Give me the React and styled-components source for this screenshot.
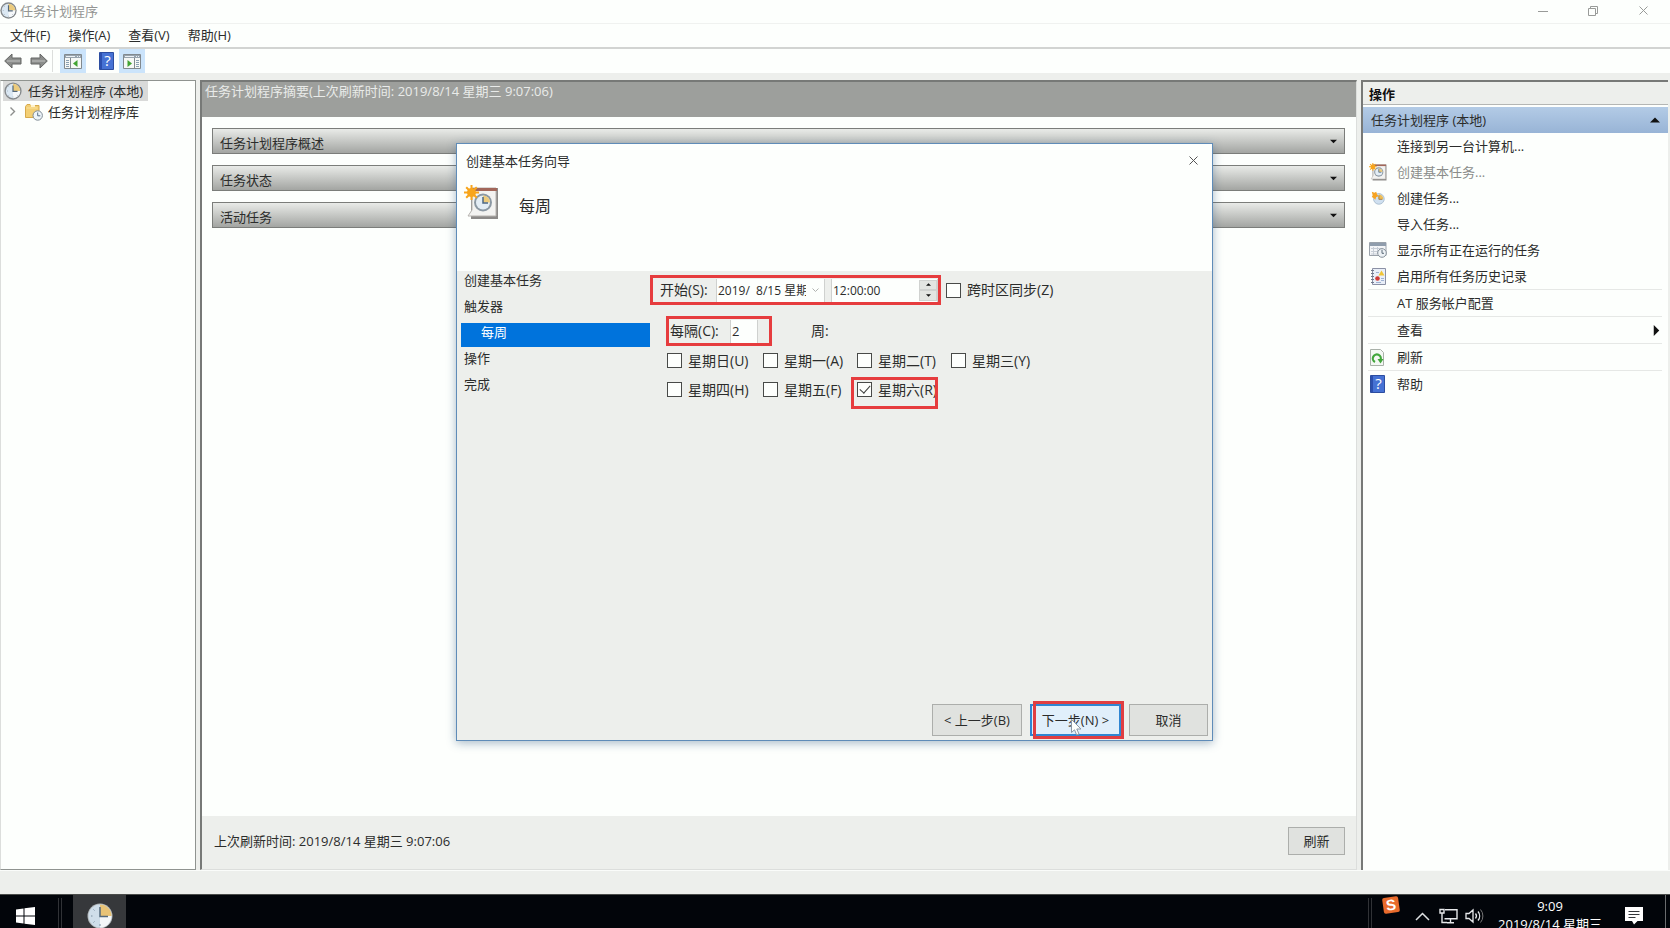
import { useState } from "react";
import styled, { createGlobalStyle, css } from "styled-components";

const GlobalStyle = createGlobalStyle`
  * {
    box-sizing: border-box;
  }
  body {
    margin: 0;
    overflow: hidden;
  }
  body, button, input {
    font-family: "Open Sans", "Noto Sans CJK SC", sans-serif;
    font-size: 13px;
    line-height: 18px;
    color: #2b2c2b;
  }
  button {
    padding: 0;
    border: 0;
    background: none;
  }
  svg {
    display: block;
    flex: none;
  }
`;

const Desktop = styled.div`
  position: relative;
  display: flex;
  flex-direction: column;
  height: 100vh;
  background: #edefec;
`;

const TitleBar = styled.header`
  display: flex;
  align-items: center;
  height: 23px;
  padding: 0 2px 2px 0;
  background: #fdfffd;
  color: #939593;
`;

const WindowTitle = styled.h1`
  flex: 1;
  margin: 0 0 0 3px;
  font-size: 13px;
  font-weight: 400;
`;

const WindowButton = styled.button`
  display: flex;
  justify-content: center;
  width: 50px;
`;

const MenuBar = styled.nav`
  display: flex;
  align-items: center;
  gap: 18px;
  height: 26px;
  padding: 0 0 2px 10px;
  background: #fdfffd;
  border-top: 1px solid #f0f2f0;
  border-bottom: 2px solid #d2d4d2;
`;

const ToolBar = styled.div`
  display: flex;
  align-items: center;
  height: 24px;
  background: #fdfffd;
`;

const ToolButton = styled.button`
  display: flex;
  align-items: center;
  justify-content: center;
  width: 26px;
  height: 24px;
  margin-left: ${(props) => props.$before || "0"};
  background: ${(props) => (props.$on ? "#cbe4fb" : "transparent")};
`;

const ToolDivider = styled.span`
  width: 1px;
  height: 22px;
  background: #dcdedc;
`;

const Workspace = styled.div`
  display: flex;
  flex: 1;
  gap: 4px;
  min-height: 0;
  padding: 7px 2px 0 0;
`;

const TreePane = styled.aside`
  flex: none;
  width: 196px;
  background: #fdfffd;
  border: 1px solid #8f9390;
  border-left-color: #dcdedc;
`;

const TreeRoot = styled.button`
  display: flex;
  align-items: center;
  gap: 6px;
  height: 20px;
  margin-left: 2px;
  padding: 0 5px 0 1px;
  background: #d9dad9;
`;

const TreeChild = styled.button`
  display: flex;
  align-items: center;
  gap: 5px;
  height: 21px;
  padding-left: 9px;

  svg:first-child {
    margin-right: 4px;
  }
`;

const Summary = styled.main`
  display: flex;
  flex: 1;
  flex-direction: column;
  min-width: 0;
  background: #fdfffd;
  border: 1px solid #dcdedc;
  border-top: 2px solid #777977;
  border-left: 2px solid #777977;
`;

const SummaryHeader = styled.div`
  height: 35px;
  padding: 0 3px;
  background: #9d9f9c;
  color: #e9ebe9;
`;

const Sections = styled.div`
  display: flex;
  flex: 1;
  flex-direction: column;
  gap: 11px;
  padding: 11px 11px 0 10px;
`;

const SectionButton = styled.button`
  display: flex;
  align-items: center;
  justify-content: space-between;
  height: 26px;
  padding: 0 7px;
  background: linear-gradient(#e9ebe8, #c6c8c5 50%, #a3a5a2);
  border: 1px solid #7b7d7a;

  span {
    padding-top: 4px;
  }
`;

const SummaryFooter = styled.footer`
  display: flex;
  align-items: center;
  justify-content: space-between;
  height: 53px;
  padding: 0 11px 3px 12px;
  background: #edefec;
`;

const PushButton = styled.button`
  position: relative;
  width: ${(props) => props.$width};
  height: ${(props) => (props.$tall ? "32px" : "28px")};
  background: #e0e2df;
  border: 1px solid #acaeab;

  ${(props) =>
    props.$primary &&
    css`
      background: #e0effb;
      border: 2px solid #2f86d3;
    `}
`;

const ActionPane = styled.aside`
  flex: none;
  width: 307px;
  background: #fdfffd;
  border-top: 2px solid #777977;
  border-left: 2px solid #777977;
`;

const PaneTitle = styled.h2`
  height: 23px;
  margin: 0 0 2px;
  padding: 3px 6px 0;
  background: #edefec;
  border-bottom: 1px solid #b4b6b4;
  font-size: 13px;
  font-weight: 700;
  line-height: 18px;
  color: #111;
`;

const ActionGroup = styled.button`
  display: flex;
  align-items: center;
  justify-content: space-between;
  width: 100%;
  height: 26px;
  padding: 0 8px;
  background: linear-gradient(#b3cbe6, #98b4d6);
`;

const ActionList = styled.ul`
  margin: 0;
  padding: 0 6px 0 5px;
  list-style: none;
`;

const ActionItem = styled.li`
  border-top: ${(props) => (props.$divided ? "1px solid #e6e8e6" : "none")};
`;

const ActionButton = styled.button`
  display: flex;
  align-items: center;
  width: 100%;
  height: 26px;
  text-align: left;

  &:disabled {
    color: #8a8c8a;
  }
`;

const IconSlot = styled.span`
  display: flex;
  justify-content: center;
  width: 19px;
  margin-right: 10px;
`;

const ActionLabel = styled.span`
  flex: 1;
`;

const StatusBar = styled.div`
  height: 24px;
  border-top: 1px solid #fafcfa;
`;

/* wizard */

const Wizard = styled.section`
  position: absolute;
  top: 143px;
  left: calc(50% - 379px);
  display: flex;
  flex-direction: column;
  width: 757px;
  background: #edefec;
  border: 1px solid #5f8cb8;
  box-shadow: 0 2px 9px rgba(40, 80, 120, 0.4);
`;

const WizardTitle = styled.div`
  display: flex;
  align-items: center;
  justify-content: space-between;
  height: 33px;
  padding: 0 14px 0 9px;
  background: #fdfffd;
`;

const WizardBanner = styled.div`
  display: flex;
  gap: 20px;
  height: 94px;
  padding: 8px 7px 0;
  background: #fdfffd;

  h2 {
    margin: 9px 0 0;
    font-size: 16px;
    font-weight: 400;
    line-height: 24px;
  }
`;

const WizardBody = styled.div`
  display: flex;
  min-height: 433px;
`;

const Steps = styled.ol`
  display: flex;
  flex-direction: column;
  gap: 2px;
  width: 193px;
  margin: 0;
  padding: 0 0 0 4px;
  list-style: none;
`;

const Step = styled.li`
  height: 24px;
  padding-left: ${(props) => (props.$current ? "20px" : "3px")};
  background: ${(props) => (props.$current ? "#0073dc" : "transparent")};
  color: ${(props) => (props.$current ? "#fff" : "inherit")};
`;

const Form = styled.form`
  flex: 1;
  padding-top: 4px;
  font-size: 14px;
`;

const FormRow = styled.div`
  display: flex;
  align-items: center;
  margin: 0 0 ${(props) => (props.$last ? "0" : "11px")} ${(props) => (props.$indent ? "16px" : "0")};
`;

const Marked = styled.div`
  display: flex;
  align-items: center;
  width: ${(props) => props.$width};
  height: 30px;
  margin-right: ${(props) => props.$after};
  padding-left: ${(props) => (props.$tight ? "1px" : "7px")};
  border: 3px solid #e63c3e;

  label {
    flex: 1;
  }
`;

const Field = styled.span`
  display: flex;
  align-items: center;
  width: ${(props) => props.$width};
  height: 23px;
  margin-right: ${(props) => props.$after};
  background: #fdfffd;
  border-left: 1px solid #cfd1cf;
  border-right: 1px solid #cfd1cf;
`;

const TextInput = styled.input`
  flex: 1;
  min-width: 0;
  height: 20px;
  padding: 0 1px;
  border: 0;
  outline: 0;
  background: transparent;
  font-size: ${(props) => (props.$large ? "13px" : "12px")};
`;

const DropButton = styled.button`
  display: flex;
  justify-content: center;
  width: 17px;
`;

const Spinner = styled.span`
  display: flex;
  flex-direction: column;
  width: 18px;
  height: 21px;
  background: #e3e5e2;

  button {
    display: flex;
    flex: 1;
    align-items: center;
    justify-content: center;
    border: 1px solid #d0d2d0;
  }
`;

const CheckLabel = styled.label`
  position: relative;
  display: flex;
  align-items: center;
  gap: 6px;
  white-space: nowrap;
`;

const CheckBox = styled.input`
  position: relative;
  flex: none;
  width: 15px;
  height: 15px;
  margin: 0;
  appearance: none;
  background: #fdfffd;
  border: 1px solid #484a48;

  &:checked::after {
    content: "";
    position: absolute;
    top: 2px;
    left: 2px;
    width: 9px;
    height: 5px;
    border: solid #3c3e3c;
    border-width: 0 0 1px 1px;
    transform: rotate(-48deg);
  }
`;

const DayGrid = styled.div`
  display: grid;
  grid-template-columns: 96px 94px 94px auto;
  grid-auto-rows: 29px;
  padding-left: 17px;
`;

const MarkedCheck = styled.div`
  position: relative;
  display: flex;
  width: 84px;

  &::after {
    content: "";
    position: absolute;
    inset: 2px 3px -5px -6px;
    border: 3px solid #e63c3e;
    pointer-events: none;
  }
`;

const WizardButtons = styled.div`
  display: flex;
  gap: 8px;
  justify-content: flex-end;
  padding: 0 4px 4px;
`;

const ButtonMark = styled.span`
  position: absolute;
  inset: -5px -5px -5px 1px;
  border: 3px solid #e03e42;
  pointer-events: none;
`;

const Pointer = styled.svg`
  position: absolute;
  top: 13px;
  left: 39px;
`;

/* taskbar */

const TaskBar = styled.footer`
  flex: none;
  height: 34px;
  overflow: hidden;
  background: #02050a;
  border-top: 1px solid #4a4c4a;
  color: #fff;
`;

const TaskBarInner = styled.div`
  display: flex;
  align-items: center;
  height: 42px;
`;

const StartButton = styled.button`
  display: flex;
  justify-content: center;
  width: 50px;
`;

const Grip = styled.span`
  width: 4px;
  height: 36px;
  margin: 0 ${(props) => props.$after} 0 ${(props) => props.$before};
  border: solid #303236;
  border-width: 0 1px;
`;

const TaskButton = styled.button`
  display: flex;
  align-items: center;
  justify-content: center;
  width: 53px;
  height: 100%;
  background: #36383b;
`;

const Tray = styled.div`
  display: flex;
  align-items: center;
  height: 100%;
  margin-left: auto;
  padding-right: 4px;
`;

const TrayButton = styled.button`
  display: flex;
  justify-content: center;
  width: ${(props) => props.$width || "26px"};
  padding-bottom: ${(props) => (props.$raised ? "22px" : "0")};
`;

const Clock = styled.time`
  width: 126px;
  height: 100%;
  padding-top: 2px;
  text-align: center;
  white-space: nowrap;
`;

const DesktopEdge = styled.span`
  width: 1px;
  height: 100%;
  margin-left: 10px;
  background: #6a6c6e;
`;

const ClockIcon = ({ size = 18 }) => (
  <svg width={size} height={size} viewBox="0 0 24 24">
    <circle cx="12" cy="12" r="11.5" fill="#85898c" />
    <circle cx="12" cy="12" r="9.6" fill="#dbe8f3" />
    <path d="M12 12V2.4A9.6 9.6 0 0 1 21.6 12Z" fill="#eccb7c" />
    <path d="M12 12h9.6A9.6 9.6 0 0 1 12 21.6Z" fill="#f5f8fa" />
    <path d="M12 4.5V12.5H18" fill="none" stroke="#54697c" strokeWidth="1.6" />
    <path d="M12 19.5v1M4 12h1M6 6l.8.8M6 18l.8-.8M18 18l-.8-.8" stroke="#8799a8" />
  </svg>
);

const TaskbarClockIcon = () => (
  <svg width="26" height="26" viewBox="0 0 26 26">
    <circle cx="13" cy="13" r="12.5" fill="#b3b8bb" />
    <circle cx="13" cy="13" r="11.5" fill="#cfdeea" />
    <path d="M13 13V1.5A11.5 11.5 0 0 1 24.5 13Z" fill="#e8c377" />
    <path d="M13 13h11.5A11.5 11.5 0 0 1 13 24.5Z" fill="#f3f6f8" />
    <path d="M13 4v9.5h8" fill="none" stroke="#54697c" strokeWidth="1.5" />
    <path d="M4 13h1.5M6.5 6.5l1 1M6.5 19.5l1-1M13 21v2" stroke="#7d92a3" />
  </svg>
);

const ArrowIcon = ({ back }) => (
  <svg width="18" height="16" viewBox="0 0 18 16">
    <path
      d={back ? "M.7 8 8 1v4h9v6H8v4Z" : "M17.3 8 10 1v4H1v6h9v4Z"}
      fill="#8b8d8b"
      stroke="#656765"
    />
    <path d={back ? "M3 8h13" : "M2 8h13"} stroke="#a6a8a6" strokeWidth="2" />
  </svg>
);

const PanelIcon = ({ right }) => (
  <svg width="18" height="15" viewBox="0 0 18 15">
    <path d="M.5.5h17v14H.5Z" fill="#f6f8f6" stroke="#81898e" />
    <path d="M1 1h16v3H1Z" fill="#98a4ae" />
    <path d="M2 2.5h9M13 2.5h1M15 2.5h1" stroke="#edf2f6" />
    {right ? (
      <>
        <path d="M11.5 4v10" stroke="#81898e" />
        <path d="M13 6.5h3M13 8.5h3M13 10.5h3M13 12.5h3" stroke="#8aa0b2" />
        <path d="M4.5 6v7L9 9.5Z" fill="#42a332" />
      </>
    ) : (
      <>
        <path d="M6.5 4v10" stroke="#81898e" />
        <path d="M2 6.5h3M2 8.5h3M2 10.5h3M2 12.5h3" stroke="#8aa0b2" />
        <path d="M13.5 6v7L9 9.5Z" fill="#42a332" />
      </>
    )}
  </svg>
);

const HelpIcon = () => (
  <svg width="15" height="18" viewBox="0 0 15 18">
    <path d="M.5.5h14v17H.5Z" fill="#4672d4" stroke="#2c4da0" />
    <path d="M1 1h2v16H1Z" fill="#2c4fae" />
    <text
      x="8.5"
      y="14"
      fill="#fff"
      fontSize="15"
      textAnchor="middle"
      fontFamily="Open Sans, sans-serif"
    >
      ?
    </text>
  </svg>
);

const FolderIcon = () => (
  <svg width="18" height="18" viewBox="0 0 18 18">
    <path d="M.5 3.5 2 1.5h3l1 1h8v12H.5Z" fill="#f3cf74" stroke="#d7aa4c" />
    <path d="M6 2h4v2H6Z" fill="#fff3cc" />
    <path d="M1.5 5h11" stroke="#fae3a0" />
    <circle cx="12.7" cy="12.5" r="4.7" fill="#edf4f9" stroke="#7f8b95" />
    <path d="M12.7 9.5v3.3h2.6" fill="none" stroke="#587085" />
  </svg>
);

const WizardIcon = ({ size = 35 }) => (
  <svg width={size} height={size} viewBox="0 0 35 35">
    <path d="M7 3h27v31H7Z" fill="#8c8a88" />
    <path d="M8 3h24v28H4l4-6Z" fill="#f3f3f1" stroke="#b6b3af" />
    <path d="M8 3h25v3H8Z" fill="#a2675a" />
    <circle cx="19" cy="17.5" r="9" fill="#8b98a3" />
    <circle cx="19" cy="17.5" r="7" fill="#e3edf5" />
    <path d="M19 17.5v-7a7 7 0 0 1 7 7Z" fill="#edcb7c" />
    <path d="M19 12v6h5" fill="none" stroke="#4d6882" strokeWidth="1.5" />
    <circle cx="7.5" cy="7.5" r="4.5" fill="#f8a51c" />
    <path
      d="M7.5 0v15M0 7.5h15M2.200 2.200l10.600 10.600M12.800 2.200 2.200 12.800"
      stroke="#f8a51c"
      strokeWidth="2"
    />
  </svg>
);

const NewTaskIcon = () => (
  <svg width="16" height="16" viewBox="0 0 18 18">
    <circle cx="10" cy="10" r="6" fill="#cfe0f0" stroke="#a8bccd" />
    <path d="M10 10V5a5 5 0 0 1 5 5Z" fill="#eebd55" />
    <path d="M10 6v4.5h4" fill="none" stroke="#a47832" />
    <path d="m2 2 3 1 2-1 1 3 2 2-3 1-1 3-2-2-2-1 1-2Z" fill="#f6a321" />
  </svg>
);

const RunningIcon = () => (
  <svg width="18" height="16" viewBox="0 0 18 16">
    <path d="M.5.5h16.5v13H.5Z" fill="#f3f5f7" stroke="#9aa2aa" />
    <path d="M1 1h16v3H1Z" fill="#8f9dac" />
    <path d="M2 6.5h12M2 9.5h8M2 12h6M4.5 5v8M8.5 5v7" stroke="#c7ced6" />
    <circle cx="13" cy="11" r="4.3" fill="#edf2f5" stroke="#87919a" />
    <path d="M13 8v3.3h2" fill="none" stroke="#5b6b79" />
  </svg>
);

const HistoryIcon = () => (
  <svg width="16" height="17" viewBox="0 0 16 17">
    <path d="M2.5.5h13v16h-13Z" fill="#e9eff8" stroke="#8b91a5" />
    <path d="M1 2.5h3M1 5.5h3M1 8.5h3M1 11.5h3M1 14.5h3" stroke="#70788c" />
    <path d="M6 4.5h3M11 10.5h3M11 12.5h3M6 14.5h5" stroke="#9fb2d2" />
    <path d="m11.500 2.500 3 5h-6Z" fill="#f0c537" />
    <circle cx="7.5" cy="10.5" r="2.3" fill="#cf3a36" />
  </svg>
);

const RefreshIcon = () => (
  <svg width="15" height="17" viewBox="0 0 15 17">
    <path d="M.5.5h10l3 3v13H.5Z" fill="#f4f8f4" stroke="#a9b1a9" />
    <path d="M5 13A4 4 0 1 1 10.5 11" fill="none" stroke="#41a63b" strokeWidth="2.2" />
    <path d="M7.5 10h6l-3 4.5Z" fill="#41a63b" />
  </svg>
);

const SogouIcon = () => (
  <svg width="18" height="18" viewBox="0 0 18 18">
    <g transform="rotate(-8 9 9)">
      <rect x="1" y="1" width="16" height="16" rx="2" fill="#e96b2c" />
      <text
        x="9"
        y="14"
        fill="#fff"
        fontSize="15"
        fontWeight="700"
        textAnchor="middle"
        fontFamily="Liberation Sans, sans-serif"
      >
        S
      </text>
    </g>
  </svg>
);

const Triangle = ({ dir = "down", size = 7 }) => {
  const shapes = {
    down: "M0 2h8L4 6Z",
    up: "M0 6h8L4 2Z",
    right: "M2 0v8l4-4Z",
  };
  return (
    <svg width={size} height={size} viewBox="0 0 8 8">
      <path d={shapes[dir]} fill="#111" />
    </svg>
  );
};

const CloseIcon = ({ color }) => (
  <svg width="9" height="9" viewBox="0 0 9 9">
    <path d="m.5.5 8 8M8.5.5l-8 8" stroke={color} />
  </svg>
);

const actions = [
  { label: "连接到另一台计算机..." },
  { label: "创建基本任务...", icon: <WizardIcon size={18} />, disabled: true },
  { label: "创建任务...", icon: <NewTaskIcon /> },
  { label: "导入任务..." },
  { label: "显示所有正在运行的任务", icon: <RunningIcon /> },
  { label: "启用所有任务历史记录", icon: <HistoryIcon /> },
  { label: "AT 服务帐户配置", divided: true },
  { label: "查看", divided: true, submenu: true },
  { label: "刷新", divided: true, icon: <RefreshIcon /> },
  { label: "帮助", divided: true, icon: <HelpIcon /> },
];

const steps = ["创建基本任务", "触发器", "每周", "操作", "完成"];

const days = [
  "星期日(U)",
  "星期一(A)",
  "星期二(T)",
  "星期三(Y)",
  "星期四(H)",
  "星期五(F)",
  "星期六(R)",
];

function DayCheck({ label, checked, onChange }) {
  return (
    <CheckLabel>
      <CheckBox type="checkbox" checked={checked} onChange={onChange} />
      {label}
    </CheckLabel>
  );
}

function TaskWizard() {
  const [picked, setPicked] = useState(["星期六(R)"]);
  const toggle = (day) =>
    setPicked(
      picked.includes(day) ? picked.filter((d) => d !== day) : [...picked, day]
    );

  return (
    <Wizard role="dialog" aria-labelledby="wizard-title">
      <WizardTitle>
        <span id="wizard-title">创建基本任务向导</span>
        <button type="button" aria-label="关闭">
          <CloseIcon color="#555" />
        </button>
      </WizardTitle>
      <WizardBanner>
        <WizardIcon />
        <h2>每周</h2>
      </WizardBanner>
      <WizardBody>
        <Steps>
          {steps.map((step) => (
            <Step key={step} $current={step === "每周"}>
              {step}
            </Step>
          ))}
        </Steps>
        <Form>
          <FormRow>
            <Marked $width="291px" $after="5px">
              <label htmlFor="start-date">开始(S):</label>
              <Field $width="109px" $after="6px">
                <TextInput id="start-date" defaultValue="2019/  8/15 星期四" />
                <DropButton type="button" aria-label="选择日期">
                  <svg width="7" height="5" viewBox="0 0 7 5">
                    <path d="m.5.5 3 3 3-3" fill="none" stroke="#b0b2b0" />
                  </svg>
                </DropButton>
              </Field>
              <Field $width="107px" $after="0">
                <TextInput aria-label="时间" defaultValue="12:00:00" />
                <Spinner>
                  <button type="button" aria-label="增加">
                    <Triangle dir="up" size={5} />
                  </button>
                  <button type="button" aria-label="减少">
                    <Triangle size={5} />
                  </button>
                </Spinner>
              </Field>
            </Marked>
            <CheckLabel>
              <CheckBox type="checkbox" />
              跨时区同步(Z)
            </CheckLabel>
          </FormRow>
          <FormRow $indent $last>
            <Marked $width="106px" $after="39px" $tight>
              <label htmlFor="interval">每隔(C):</label>
              <Field $width="28px" $after="11px">
                <TextInput id="interval" $large defaultValue="2" />
              </Field>
            </Marked>
            <span>周:</span>
          </FormRow>
          <DayGrid>
            {days.map((day) => {
              const check = (
                <DayCheck
                  key={day}
                  label={day}
                  checked={picked.includes(day)}
                  onChange={() => toggle(day)}
                />
              );
              return day === "星期六(R)" ? (
                <MarkedCheck key={day}>{check}</MarkedCheck>
              ) : (
                check
              );
            })}
          </DayGrid>
        </Form>
      </WizardBody>
      <WizardButtons>
        <PushButton $width="90px" $tall>
          &lt; 上一步(B)
        </PushButton>
        <PushButton $width="91px" $tall $primary>
          下一步(N) &gt;
          <ButtonMark />
          <Pointer width="11" height="17" viewBox="0 0 11 17">
            <path
              d="M.5.5v13l3-2.7 2.2 5.2 2.3-1-2.2-5h4.2Z"
              fill="#fdfffd"
              stroke="#8a98a6"
            />
          </Pointer>
        </PushButton>
        <PushButton $width="79px" $tall>
          取消
        </PushButton>
      </WizardButtons>
    </Wizard>
  );
}

export default function App() {
  return (
    <Desktop>
      <GlobalStyle />
      <TitleBar>
        <ClockIcon size={17} />
        <WindowTitle>任务计划程序</WindowTitle>
        <WindowButton aria-label="最小化">
          <svg width="10" height="10" viewBox="0 0 10 10">
            <path d="M0 5.5h10" stroke="#999b99" />
          </svg>
        </WindowButton>
        <WindowButton aria-label="还原">
          <svg width="10" height="10" viewBox="0 0 10 10">
            <path d="M.5 2.5h7v7h-7ZM2.5 2.5v-2h7v7h-2" fill="none" stroke="#999b99" />
          </svg>
        </WindowButton>
        <WindowButton aria-label="关闭">
          <CloseIcon color="#999b99" />
        </WindowButton>
      </TitleBar>
      <MenuBar>
        <button>文件(F)</button>
        <button>操作(A)</button>
        <button>查看(V)</button>
        <button>帮助(H)</button>
      </MenuBar>
      <ToolBar>
        <ToolButton aria-label="后退">
          <ArrowIcon back />
        </ToolButton>
        <ToolButton aria-label="前进">
          <ArrowIcon />
        </ToolButton>
        <ToolDivider />
        <ToolButton $on $before="7px" aria-label="控制台树">
          <PanelIcon />
        </ToolButton>
        <ToolButton $before="7px" aria-label="帮助">
          <HelpIcon />
        </ToolButton>
        <ToolButton $on aria-label="操作窗格">
          <PanelIcon right />
        </ToolButton>
      </ToolBar>

      <Workspace>
        <TreePane>
          <TreeRoot>
            <ClockIcon />
            任务计划程序 (本地)
          </TreeRoot>
          <TreeChild>
            <svg width="6" height="9" viewBox="0 0 6 9">
              <path d="m.5.5 4 4-4 4" fill="none" stroke="#8d8f8d" strokeWidth="1.4" />
            </svg>
            <FolderIcon />
            任务计划程序库
          </TreeChild>
        </TreePane>

        <Summary>
          <SummaryHeader>
            任务计划程序摘要(上次刷新时间: 2019/8/14 星期三 9:07:06)
          </SummaryHeader>
          <Sections>
            {["任务计划程序概述", "任务状态", "活动任务"].map((name) => (
              <SectionButton key={name}>
                <span>{name}</span>
                <Triangle />
              </SectionButton>
            ))}
          </Sections>
          <SummaryFooter>
            <span>上次刷新时间: 2019/8/14 星期三 9:07:06</span>
            <PushButton $width="57px">刷新</PushButton>
          </SummaryFooter>
        </Summary>

        <ActionPane>
          <PaneTitle>操作</PaneTitle>
          <ActionGroup>
            任务计划程序 (本地)
            <Triangle dir="up" size={10} />
          </ActionGroup>
          <ActionList>
            {actions.map(({ label, icon, disabled, divided, submenu }) => (
              <ActionItem key={label} $divided={divided}>
                <ActionButton disabled={disabled}>
                  <IconSlot>{icon}</IconSlot>
                  <ActionLabel>{label}</ActionLabel>
                  {submenu && <Triangle dir="right" size={11} />}
                </ActionButton>
              </ActionItem>
            ))}
          </ActionList>
        </ActionPane>
      </Workspace>
      <StatusBar />

      <TaskBar>
        <TaskBarInner>
          <StartButton aria-label="开始">
            <svg width="19" height="18" viewBox="0 0 19 18">
              <path
                d="M0 2.5 7.5 1.5v7H0ZM8.5 1.3 19 0v8.5H8.5ZM0 9.5h7.5v7L0 15.5ZM8.5 9.5H19V18L8.5 16.7Z"
                fill="#fff"
              />
            </svg>
          </StartButton>
          <Grip $before="8px" $after="11px" />
          <TaskButton aria-label="任务计划程序">
            <TaskbarClockIcon />
          </TaskButton>
          <Tray>
            <Grip $before="0" $after="1px" />
            <TrayButton $width="36px" $raised aria-label="输入法">
              <SogouIcon />
            </TrayButton>
            <TrayButton aria-label="显示隐藏的图标">
              <svg width="15" height="9" viewBox="0 0 15 9">
                <path d="m1 8 6.5-6.5L14 8" fill="none" stroke="#dfe1e3" strokeWidth="1.5" />
              </svg>
            </TrayButton>
            <TrayButton aria-label="网络">
              <svg width="19" height="16" viewBox="0 0 19 16">
                <path
                  d="M6 1.7h12v9H5.5M11.5 11v3.5M8 14.7h7M1 1.5h4v3.5H1ZM3 5v9.5h5"
                  fill="none"
                  stroke="#e6e8ea"
                  strokeWidth="1.4"
                />
              </svg>
            </TrayButton>
            <TrayButton aria-label="音量">
              <svg width="19" height="16" viewBox="0 0 19 16">
                <path
                  d="M1 5.5h3L8 2v12l-4-3.5H1ZM10.5 5.5a4 4 0 0 1 0 5M13 3.5a7 7 0 0 1 0 9"
                  fill="none"
                  stroke="#e6e8ea"
                  strokeWidth="1.3"
                />
                <path d="M15.5 1.5a10 10 0 0 1 0 13" fill="none" stroke="#777" />
              </svg>
            </TrayButton>
            <Clock>
              9:09
              <br />
              2019/8/14 星期三
            </Clock>
            <TrayButton $width="42px" aria-label="通知">
              <svg width="18" height="18" viewBox="0 0 18 18">
                <path d="M0 0h18v14h-5.5L9 17.5 7 14H0Z" fill="#fff" />
                <path d="M3.5 4.5h11M3.5 7.5h11M3.5 10.5h7" stroke="#33363a" />
              </svg>
            </TrayButton>
            <DesktopEdge />
          </Tray>
        </TaskBarInner>
      </TaskBar>

      <TaskWizard />
    </Desktop>
  );
}
